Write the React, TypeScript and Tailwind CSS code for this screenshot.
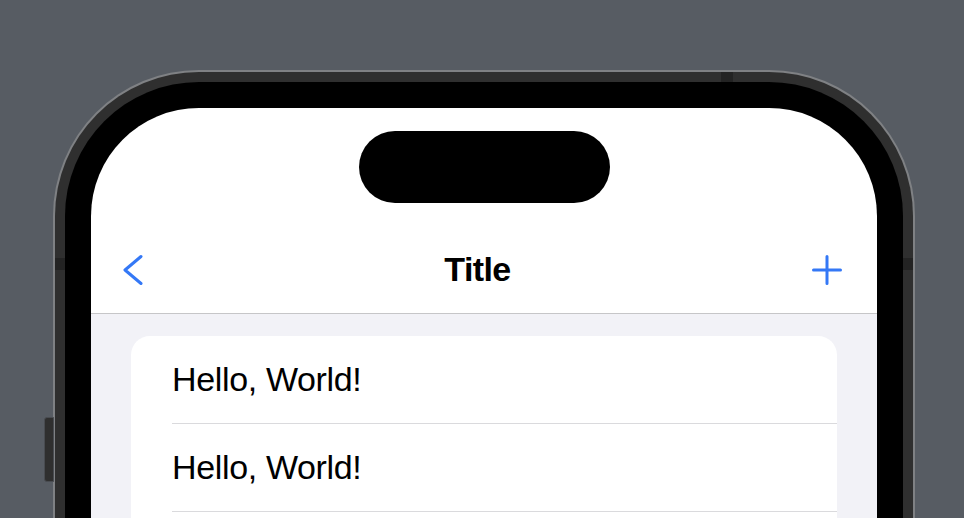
const rows = ['Hello, World!', 'Hello, World!']

function Chevron() {
  return (
    <svg width="20" height="32" viewBox="0 0 20 32" fill="none">
      <polyline
        points="18,2.5 2,16 18,29.5"
        stroke="#3478f6"
        strokeWidth="3"
        strokeLinecap="round"
        strokeLinejoin="round"
      />
    </svg>
  )
}

function Plus() {
  return (
    <svg width="30" height="30" viewBox="0 0 30 30" fill="none">
      <path d="M15 1.5v27M1.5 15h27" stroke="#3478f6" strokeWidth="3" strokeLinecap="round" />
    </svg>
  )
}

export default function App() {
  return (
    <div className="h-[518px] w-[964px] overflow-hidden bg-[#575c63] pl-[53px] pt-[70px] font-['Liberation_Sans',Arial,sans-serif]">
      <div className="relative w-[862px]">
        {/* side button */}
        <div className="absolute left-[-9px] top-[347px] h-[65px] w-[10px] rounded-l-[3px] border border-[#494c51] bg-[#2f2f2f]" />
        <div className="h-[760px] rounded-[146px] bg-[#7f8184] p-[2px]">
          <div className="relative h-full rounded-[144px] bg-[#2f2f2f] p-[10px]">
            {/* antenna bands */}
            <div className="absolute left-0 top-[186px] h-[12px] w-[10px] bg-[#232323]" />
            <div className="absolute right-0 top-[186px] h-[12px] w-[10px] bg-[#232323]" />
            <div className="absolute left-[666px] top-0 h-[10px] w-[12px] bg-[#232323]" />
            <div className="h-full rounded-[134px] bg-black p-[26px]">
              <div className="flex h-full flex-col overflow-hidden rounded-[108px] bg-white">
                <div className="flex shrink-0 justify-center pt-[23px]">
                  <div className="h-[72px] w-[251px] rounded-full bg-black" />
                </div>
                <div className="mt-[23px] flex h-[88px] shrink-0 items-center justify-between border-b border-[#c6c6c8] pl-[32px] pr-[35px]">
                  <Chevron />
                  <div className="text-[34px] font-bold tracking-[-0.6px] text-black">Title</div>
                  <Plus />
                </div>
                <div className="flex-1 bg-[#f2f2f7] px-[40px] pt-[22px]">
                  <div className="overflow-hidden rounded-[19px] bg-white pb-[80px]">
                    {rows.map((r, i) => (
                      <div key={i} className="pl-[41px]">
                        <div className="flex h-[88px] items-center border-b border-[#dadadd] text-[34px] tracking-[-0.35px] text-black">
                          {r}
                        </div>
                      </div>
                    ))}
                  </div>
                </div>
              </div>
            </div>
          </div>
        </div>
      </div>
    </div>
  )
}
